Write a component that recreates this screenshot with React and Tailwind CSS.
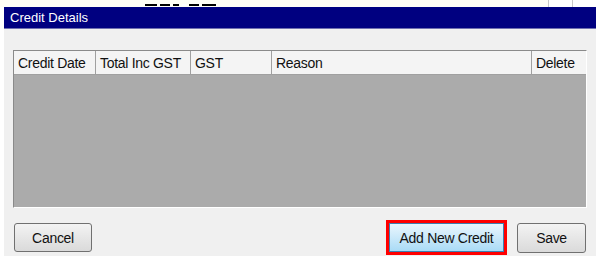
export default function App() {
  const font = { fontFamily: '"Liberation Sans", Arial, sans-serif' };
  const cols = [
    { label: "Credit Date", w: "w-[82px]" },
    { label: "Total Inc GST", w: "w-[95px]" },
    { label: "GST", w: "w-[81px]" },
    { label: "Reason", w: "w-[260px]" },
    { label: "Delete", w: "flex-1" },
  ];
  return (
    <div className="w-[600px] h-[261px] bg-white flex flex-col overflow-hidden" style={font}>
      <div className="h-[7px] flex bg-[#fffef6] relative">
        <div className="absolute left-[145px] top-[4px] flex gap-[3px]">
          <div className="w-[12px] h-[2px] bg-black" />
          <div className="w-[10px] h-[2px] bg-black" />
          <div className="w-[6px] h-[2px] bg-black" />
          <div className="w-[4px] h-[2px] bg-white" />
          <div className="w-[10px] h-[2px] bg-black" />
          <div className="w-[14px] h-[2px] bg-black" />
        </div>
        <div className="absolute left-[548px] top-0 w-[52px] h-[7px] bg-white border-l border-[#c8c8c8]">
          <div className="ml-[9px] w-[15px] h-[7px] border-r border-[#c8c8c8]" />
        </div>
      </div>
      <div className="mx-[4px] flex flex-col">
        <div className="h-[22px] bg-[#000080] text-white text-[13px] leading-[22px] pl-[6px] border-b border-[#6f6fb0]">
          Credit Details
        </div>
        <div className="bg-[#f0f0f0] h-[227px] px-[9px] pt-[21px] flex flex-col">
          <div className="h-[158px] flex flex-col border border-t-[#8a8a8a] border-l-[#8a8a8a] border-r-[#ffffff] border-b-[#ffffff]">
            <div className="h-[24px] flex bg-[#f4f4f4] border-b border-[#a0a0a0]">
              {cols.map((c, i) => (
                <div
                  key={i}
                  className={`${c.w} h-full pl-[4px] text-[14px] tracking-[-0.3px] leading-[25px] text-[#111] whitespace-nowrap ${i < 4 ? "border-r border-[#a0a0a0]" : ""}`}
                >
                  {c.label}
                </div>
              ))}
            </div>
            <div className="flex-1 bg-[#ababab]" />
          </div>
          <div className="mt-[12px] h-[35px] flex items-center justify-between">
            <button className="ml-[1px] w-[78px] h-[29px] pt-[2px] rounded-[3px] border border-[#707070] bg-gradient-to-b from-[#f3f3f3] to-[#dadada] text-[14px] tracking-[-0.3px] text-[#111]">
              Cancel
            </button>
            <div className="flex items-center mr-[1px]">
              <div className="w-[121px] h-[35px] border-[3px] border-[#ff0000] flex">
                <button className="flex-1 h-full pt-[2px] border border-[#3c7fb1] bg-gradient-to-b from-[#eaf6fd] to-[#a9dbf6] text-[14px] tracking-[-0.3px] text-[#111]">
                  Add New Credit
                </button>
              </div>
              <button className="ml-[10px] w-[69px] h-[30px] pt-[2px] rounded-[3px] border border-[#707070] bg-gradient-to-b from-[#f3f3f3] to-[#dadada] text-[14px] tracking-[-0.3px] text-[#111]">
                Save
              </button>
            </div>
          </div>
        </div>
      </div>
    </div>
  );
}
